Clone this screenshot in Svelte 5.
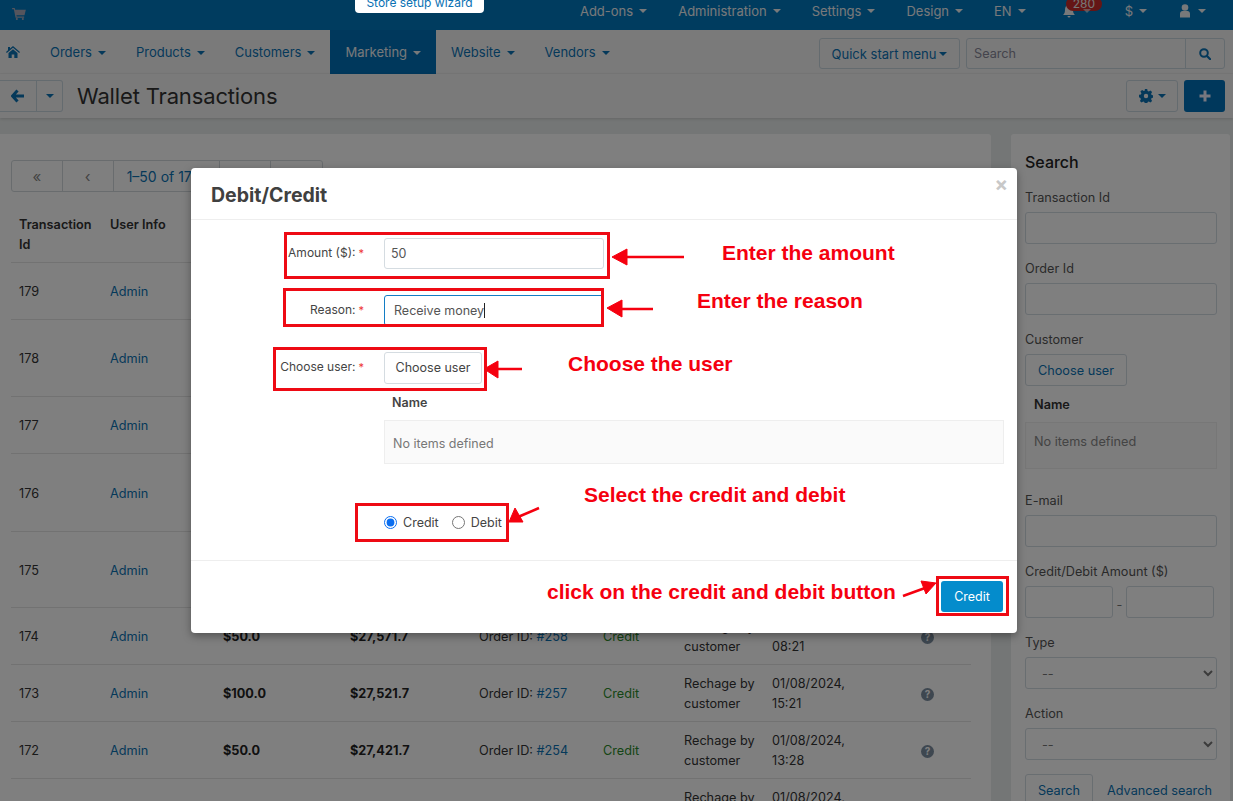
<script>
  const topItems = [
    { label: 'Add-ons' }, { label: 'Administration' }, { label: 'Settings' }, { label: 'Design' }, { label: 'EN' }
  ];
  const navItems = [
    { label: 'Orders' }, { label: 'Products' }, { label: 'Customers' },
    { label: 'Marketing', active: true }, { label: 'Website' }, { label: 'Vendors' }
  ];
  const rows = [
    { id: 179, h: 57, amount: '$50.0', balance: '$28,171.7', order: '#262', date: '02/08/2024,', time: '09:10' },
    { id: 178, h: 77, amount: '$100.0', balance: '$28,121.7', order: '#261', date: '02/08/2024,', time: '08:55' },
    { id: 177, h: 57, amount: '$200.0', balance: '$28,021.7', order: '#260', date: '01/08/2024,', time: '17:40' },
    { id: 176, h: 78, amount: '$100.0', balance: '$27,821.7', order: '#259', date: '01/08/2024,', time: '16:02' },
    { id: 175, h: 76, amount: '$150.0', balance: '$27,721.7', order: '#259', date: '01/08/2024,', time: '15:44' },
    { id: 174, h: 57, amount: '$50.0', balance: '$27,571.7', order: '#258', date: '02/08/2024,', time: '08:21' },
    { id: 173, h: 57, amount: '$100.0', balance: '$27,521.7', order: '#257', date: '01/08/2024,', time: '15:21' },
    { id: 172, h: 57, amount: '$50.0', balance: '$27,421.7', order: '#254', date: '01/08/2024,', time: '13:28' },
    { id: 171, h: 57, amount: '$50.0', balance: '$27,371.7', order: '#253', date: '01/08/2024,', time: '12:10' }
  ];
</script>

<div class="page">
  <header class="topbar">
    <svg class="cart" viewBox="0 0 16 14"><path d="M0 0h3l.5 2H16l-1.600 6.500H5l.3 1.500H14v1.400H4L2 1.400H0z"/><circle cx="5.500" cy="12.800" r="1.200"/><circle cx="12.500" cy="12.800" r="1.200"/></svg>
    <div class="topmenu">
      {#each topItems as item}
        <span class="topitem">{item.label}<i class="caret"></i></span>
      {/each}
      <span class="topitem bell">
        <svg class="ic14" viewBox="0 0 14 14"><path d="M7 0a1 1 0 0 1 1 1.100C10.200 1.600 11 3.500 11 6c0 3 1 4 2 5H1c1-1 2-2 2-5 0-2.500.8-4.400 3-4.900A1 1 0 0 1 7 0zM5.500 12h3a1.500 1.500 0 0 1-3 0z"/></svg>
        <b class="badge">280</b><i class="caret"></i>
      </span>
      <span class="topitem">$<i class="caret"></i></span>
      <span class="topitem">
        <svg class="ic14" viewBox="0 0 14 14"><circle cx="7" cy="3.500" r="3.300"/><path d="M2 13.500V10c0-2 1-3 2.500-3h5C11 7 12 8 12 10v3.500z"/></svg><i class="caret"></i>
      </span>
    </div>
  </header>

  <nav class="navbar">
    <svg class="home" viewBox="0 0 14 12"><path d="M7 0l7 6-.8.900L7 1.700.8 6.900 0 6l2-1.700V1h2v1.600zM2.500 7L7 3.200 11.500 7v5H8.300V8.500H5.700V12H2.500z"/></svg>
    <div class="navitems">
      {#each navItems as item}
        <span class="navitem" class:active={item.active}>{item.label}<i class="caret"></i></span>
      {/each}
    </div>
    <div class="navtools">
      <span class="btn quick">Quick start menu<i class="caret"></i></span>
      <div class="searchgroup">
        <span class="ph">Search</span>
        <span class="searchbtn">
          <svg class="ic12" viewBox="0 0 12 12"><circle cx="5" cy="5" r="3.800" fill="none" stroke="currentColor" stroke-width="2"/><path d="M8 8l3.200 3.200" stroke="currentColor" stroke-width="2.200" stroke-linecap="round"/></svg>
        </span>
      </div>
    </div>
  </nav>

  <div class="titlebar">
    <div class="backgroup">
      <span class="backbtn">
        <svg class="ic14" viewBox="0 0 14 14"><path d="M6.500 1.500L1.500 7l5 5.500M2 7h11" fill="none" stroke="currentColor" stroke-width="3"/></svg>
      </span>
      <span class="backcaret"><i class="caret"></i></span>
    </div>
    <h1>Wallet Transactions</h1>
    <div class="titletools">
      <span class="gearbtn">
        <svg class="ic14" viewBox="0 0 14 14"><path fill-rule="evenodd" d="M5.800 0h2.400l.4 1.900 1.200.5 1.600-1 1.700 1.700-1 1.600.5 1.200 1.900.4v2.400l-1.900.4-.5 1.200 1 1.600-1.700 1.700-1.600-1-1.200.5-.4 1.900H5.800l-.4-1.900-1.200-.5-1.600 1-1.700-1.700 1-1.600-.5-1.200L0 8.200V5.800l1.900-.4.500-1.200-1-1.600 1.700-1.700 1.600 1 1.200-.5zM7 4.800a2.200 2.200 0 1 0 0 4.400 2.200 2.200 0 0 0 0-4.400z"/></svg>
        <i class="caret"></i>
      </span>
      <span class="plusbtn">
        <svg class="ic12" viewBox="0 0 12 12"><path d="M6 .5v11M.5 6h11" stroke="currentColor" stroke-width="3"/></svg>
      </span>
    </div>
  </div>

  <main class="content">
    <section class="tablecard">
      <div class="pager">
        <span class="pg sym">«</span>
        <span class="pg sym">‹</span>
        <span class="pg range">1–50 of 179</span>
        <span class="pg sym">›</span>
        <span class="pg sym">»</span>
      </div>
      <div class="thead tgrid">
        <span>Transaction Id</span><span>User Info</span><span>Amount</span><span>Balance</span>
        <span>Reference</span><span>Action</span><span>Reason</span><span>Date</span><span></span>
      </div>
      {#each rows as r}
        <div class="trow tgrid" style="height:{r.h}px">
          <span>{r.id}</span>
          <span class="link">Admin</span>
          <b>{r.amount}</b>
          <b>{r.balance}</b>
          <span>Order ID: <span class="link">{r.order}</span></span>
          <span class="green">Credit</span>
          <span class="two">Rechage by<br />customer</span>
          <span class="two">{r.date}<br />{r.time}</span>
          <span class="q">?</span>
        </div>
      {/each}
    </section>

    <aside class="side">
      <h2>Search</h2>
      <label for="s1">Transaction Id</label><input id="s1" class="sinput" />
      <label for="s2">Order Id</label><input id="s2" class="sinput" />
      <span class="slabel">Customer</span>
      <span class="choose">Choose user</span>
      <strong class="sname">Name</strong>
      <div class="sempty">No items defined</div>
      <label for="s3">E-mail</label><input id="s3" class="sinput" />
      <label for="s4">Credit/Debit Amount ($)</label>
      <div class="range2"><input id="s4" class="sinput" /><span>-</span><input class="sinput" aria-label="to" /></div>
      <label for="s5">Type</label><select id="s5" class="sinput"><option>--</option></select>
      <label for="s6">Action</label><select id="s6" class="sinput"><option>--</option></select>
      <div class="sactions"><span class="searchb">Search</span><span class="adv">Advanced search</span></div>
    </aside>
  </main>
</div>

<div class="backdrop"></div>
<span class="wizard">Store setup wizard</span>

<div class="modal">
  <div class="mhead"><h3>Debit/Credit</h3><span class="close">×</span></div>
  <div class="mbody">
    <div class="frow r1"><span class="flabel">Amount ($):<em>*</em></span><input class="finput" value="50" /></div>
    <div class="frow r2"><span class="flabel">Reason:<em>*</em></span><div class="finput focus">Receive money<i class="cursor"></i></div></div>
    <div class="frow r3"><span class="flabel">Choose user:<em>*</em></span><span class="mchoose">Choose user</span></div>
    <strong class="mname">Name</strong>
    <div class="mempty">No items defined</div>
    <div class="radios">
      <label><input type="radio" name="k" checked />Credit</label>
      <label><input type="radio" name="k" />Debit</label>
    </div>
  </div>
  <div class="mfoot"><span class="creditbtn">Credit</span></div>
</div>

<svg class="arrows" viewBox="0 0 1233 801">
  <g fill="#f5000f" stroke="#f5000f">
    <path d="M684 257H622" stroke-width="2.500"/><path d="M612 257l15-8v16z"/>
    <path d="M653 309H618" stroke-width="2.500"/><path d="M607 308l15-8v17z"/>
    <path d="M522 369H494" stroke-width="2.500"/><path d="M484 369l14-8v17z"/>
    <path d="M539 508L518 517" stroke-width="2.500"/><path d="M509 522l6-14 8 14z"/>
    <path d="M903 596L925 588" stroke-width="2.500"/><path d="M936 583l-15-2 5 13z"/>
  </g>
</svg>

<i class="rbox b1"></i><i class="rbox b2"></i><i class="rbox b3"></i><i class="rbox b4"></i><i class="rbox b5"></i>
<span class="note n1">Enter the amount</span>
<span class="note n2">Enter the reason</span>
<span class="note n3">Choose the user</span>
<span class="note n4">Select the credit and debit</span>
<span class="note n5">click on the credit and debit button</span>

<style>
  :global(body) {
    margin: 0;
    width: 1233px;
    height: 801px;
    overflow: hidden;
    position: relative;
    font-family: Inter, "Noto Sans", sans-serif;
    font-size: 12.700px;
    color: #333;
    background: #eaeeee;
  }
  .page { width: 1233px; height: 801px; overflow: hidden; display: flex; flex-direction: column; }
  .caret {
    display: inline-block; width: 0; height: 0; margin-left: 6px; vertical-align: middle;
    border-left: 4px solid transparent; border-right: 4px solid transparent; border-top: 4px solid currentColor;
  }
  .topbar {
    flex: none; height: 30px; background: #0078bf; color: #f0f3f5; font-size: 13px;
    display: flex; align-items: center; padding: 0 27px 0 12px; box-sizing: border-box;
  }
  .cart { width: 14px; height: 12px; fill: #aab; margin-top: -2px; }
  .ic14 { width: 14px; height: 14px; fill: currentColor; }
  .ic12 { width: 12px; height: 12px; }
  .topmenu { margin-left: auto; display: flex; align-items: center; gap: 31px; margin-top: -9px; height: 20px; }
  .topitem { position: relative; white-space: nowrap; display: flex; align-items: center; }
  .bell { width: 32px; margin-left: 5px; }
  .bell .caret { margin-left: 7px; opacity: .6; }
  .badge {
    position: absolute; left: 4px; top: -7px; height: 14px; padding: 0 7px; border-radius: 8px;
    background: #c92a2a; color: #eee; font-size: 12px; font-weight: 400; line-height: 14px;
  }
  .navbar {
    flex: none; height: 44px; background: #f5f5f5; display: flex; align-items: flex-start;
    padding: 0 8px 0 6px; box-sizing: border-box; border-bottom: 1px solid #eee;
  }
  .home { width: 14px; height: 12px; fill: #0b72b4; margin-top: 16px; }
  .navitems { display: flex; margin-left: 15px; }
  .navitem { height: 44px; line-height: 44px; padding: 0 15px; color: #0b72b4; white-space: nowrap; font-size: 13px; }
  .navitem.active { background: #0070b8; color: #eef2f5; }
  .navtools { margin-left: auto; display: flex; gap: 6px; margin-top: 8px; }
  .btn, .searchgroup { height: 31px; box-sizing: border-box; border: 1px solid #c9d6df; border-radius: 3px; display: flex; align-items: center; }
  .quick { width: 141px; justify-content: center; color: #0b72b4; font-size: 13px; }
  .quick .caret { margin-left: 3px; }
  .searchgroup { width: 259px; color: #889; }
  .ph { flex: 1; padding-left: 7px; }
  .searchbtn { width: 38px; height: 100%; border-left: 1px solid #c9d6df; display: flex; align-items: center; justify-content: center; color: #0b72b4; }
  .titlebar {
    flex: none; height: 44px; background: #f5f5f5; display: flex; align-items: center; padding: 0 8px 0 0;
    box-sizing: border-box; box-shadow: 0 1px 3px rgba(0,0,0,.15); position: relative;
  }
  .backgroup { display: flex; height: 32px; width: 63px; border: 1px solid #c9d6df; border-left: 0; border-radius: 0 3px 3px 0; box-sizing: border-box; color: #0b72b4; }
  .backbtn { width: 37px; display: flex; align-items: center; justify-content: center; border-right: 1px solid #c9d6df; box-sizing: border-box; }
  .backcaret { flex: 1; display: flex; align-items: center; justify-content: center; }
  .backcaret .caret { margin: 0; }
  h1 { margin: 0 0 0 14px; font-size: 22px; font-weight: 400; color: #333; letter-spacing: -.15px; white-space: nowrap; }
  .titletools { margin-left: auto; display: flex; gap: 6px; }
  .gearbtn { width: 52px; height: 32px; box-sizing: border-box; border: 1px solid #c9d6df; border-radius: 3px; display: flex; align-items: center; justify-content: center; color: #0b72b4; }
  .gearbtn .caret { margin-left: 5px; }
  .plusbtn { width: 41px; height: 32px; background: #0070b8; color: #eef; border-radius: 3px; display: flex; align-items: center; justify-content: center; }
  .content { flex: 1; display: flex; align-items: flex-start; padding-top: 16px; min-height: 0; background: #e9edec; }
  .tablecard { width: 991px; height: 700px; background: #fff; padding: 26px 20px 0 11px; box-sizing: border-box; border-radius: 0 3px 0 0; flex: none; }
  .pager { display: flex; height: 32px; box-sizing: border-box; border: 1px solid #d3d9dd; border-radius: 3px; width: 312px; }
  .pg { display: flex; align-items: center; justify-content: center; width: 51px; border-right: 1px solid #d3d9dd; box-sizing: border-box; color: #888; font-size: 15px; }
  .pg:last-child { border-right: 0; }
  .range { width: 107px; color: #0b72b4; font-size: 14px; white-space: nowrap; justify-content: flex-start; padding-left: 13px; overflow: hidden; }
  .tgrid { display: grid; grid-template-columns: 99px 113px 127px 129px 124px 81px 88px 149px 50px; }
  .tgrid > :first-child { padding-left: 8px; }
  .thead { margin-top: 20px; height: 51px; font-weight: 600; line-height: 20px; border-bottom: 1px solid #e4e4e4; box-sizing: border-box; padding-top: 3px; }
  .thead > :first-child { padding-right: 10px; }
  .trow { align-items: center; border-bottom: 1px solid #e4e4e4; box-sizing: border-box; line-height: 20px; padding-top: 2px; }
  .trow b { font-weight: 700; color: #222; }
  .link { color: #0b72b4; }
  .green { color: #2a8a2a; }
  .q { width: 13px; height: 13px; border-radius: 50%; background: #7c8ea0; color: #fff; font-size: 10px; font-weight: 700; line-height: 13px; text-align: center; }
  .side { margin-left: 20px; width: 219px; height: 700px; background: #fff; border-radius: 3px 3px 0 0; box-sizing: border-box; padding: 18px 13px 0 14px; display: flex; flex-direction: column; align-items: flex-start; flex: none; }
  h2 { margin: 0 0 15px; font-size: 16px; font-weight: 500; line-height: 20px; color: #222; }
  .side label, .slabel { line-height: 20px; padding-top: 1px; margin-bottom: 4px; color: #555; }
  .sinput { width: 192px; height: 32px; box-sizing: border-box; border: 1px solid #d3dce2; border-radius: 3px; background: #fff; margin: 0 0 14px; padding: 0 12px; font: inherit; color: #777; flex: none; }
  .choose { width: 102px; height: 32px; box-sizing: border-box; border: 1px solid #d3dce2; border-radius: 3px; display: flex; align-items: center; justify-content: center; color: #0b72b4; }
  .sname { margin: 10px 0 0 9px; line-height: 18px; font-weight: 600; }
  .sempty { margin: 8px 0 21px; width: 192px; height: 47px; box-sizing: border-box; border: 1px solid #eee; background: #fafafa; padding: 9px 8px; color: #888; line-height: 20px; }
  .range2 { display: flex; gap: 0; align-items: flex-start; width: 192px; }
  .range2 .sinput { width: 88px; }
  .range2 span { width: 13px; text-align: center; line-height: 38px; color: #777; }
  .sactions { display: flex; align-items: center; gap: 14px; }
  .searchb { width: 68px; height: 32px; box-sizing: border-box; border: 1px solid #d3dce2; border-radius: 3px; display: flex; align-items: center; justify-content: center; color: #0b72b4; }
  .adv { color: #0b72b4; white-space: nowrap; }

  .backdrop { position: absolute; inset: 0; background: rgba(0,0,0,.5); }
  .wizard {
    position: absolute; left: 355px; top: -8px; width: 129px; height: 21px; background: #fff; color: #0b72b4;
    border-radius: 4px; display: flex; align-items: center; justify-content: center; font-size: 12px;
  }
  .modal {
    position: absolute; left: 191px; top: 168px; width: 826px; height: 465px; background: #fff; border-radius: 4px;
    box-shadow: 0 3px 8px rgba(0,0,0,.35); display: flex; flex-direction: column; box-sizing: border-box;
  }
  .mhead { flex: none; height: 52px; box-sizing: border-box; border-bottom: 1px solid #eee; position: relative; padding: 14px 20px 0; }
  h3 { margin: 0; font-size: 19.500px; line-height: 27px; font-weight: 700; color: #404040; }
  .close { position: absolute; right: 9px; top: 6px; color: #c8c8c8; font-size: 20px; line-height: 20px; font-weight: 700; }
  .mbody { flex: 1; position: relative; box-sizing: border-box; padding: 18px 13px 0 0; display: flex; flex-direction: column; align-items: flex-start; border-bottom: 1px solid #eee; }
  .frow { display: flex; align-items: flex-start; width: 100%; }
  .flabel { width: 173px; flex: none; text-align: right; white-space: nowrap; line-height: 20px; padding-top: 5px; box-sizing: border-box; color: #444; font-size: 12px; }
  .flabel em { color: #e33; font-style: normal; margin-left: 3px; font-size: 11px; }
  .r1 { margin-bottom: 26px; }
  .r2 { margin-bottom: 26px; }
  .finput { margin-left: 20px; width: 220px; height: 31px; box-sizing: border-box; border: 1px solid #d5dce1; border-radius: 3px; padding: 0 6px; font: inherit; color: #555; display: flex; align-items: center; font-size: 12.500px; }
  .focus { border-color: #137dc5; padding-left: 9px; }
  .cursor { width: 1px; height: 15px; background: #222; }
  .mchoose { margin-left: 20px; width: 98px; height: 32px; padding-bottom: 1px; box-sizing: border-box; border: 1px solid #d5dce1; border-radius: 3px; display: flex; align-items: center; justify-content: center; color: #444; font-size: 12.500px; }
  .mname { margin: 10px 0 0 201px; line-height: 18px; font-weight: 600; font-size: 12.500px; color: #444; }
  .mempty { margin: 8px 0 0 193px; width: 620px; height: 44px; box-sizing: border-box; border: 1px solid #eee; background: #fafafa; padding: 0 8px; line-height: 46px; color: #777; font-size: 12.500px; }
  .radios { margin: 51px 0 0 193px; display: flex; gap: 13px; color: #444; font-size: 12.500px; }
  .radios label { display: flex; align-items: center; }
  .radios input { width: 13px; height: 13px; margin: 0 6px 0 0; accent-color: #0a6ef0; }
  .mfoot { flex: none; height: 72px; display: flex; justify-content: flex-end; padding: 20px 14px 0 0; box-sizing: border-box; }
  .creditbtn { width: 62px; height: 31px; background: #048ccc; color: #fff; border-radius: 3px; display: flex; align-items: center; justify-content: center; font-size: 12.500px; }

  .arrows { position: absolute; left: 0; top: 0; width: 1233px; height: 801px; pointer-events: none; }
  .rbox { position: absolute; box-sizing: border-box; border: 3px solid #ee0a14; }
  .b1 { left: 284px; top: 232px; width: 326px; height: 47px; }
  .b2 { left: 283px; top: 288px; width: 321px; height: 39px; }
  .b3 { left: 273px; top: 347px; width: 214px; height: 44px; }
  .b4 { left: 355px; top: 503px; width: 154px; height: 39px; }
  .b5 { left: 936px; top: 576px; width: 73px; height: 40px; }
  .note { position: absolute; font-family: "Liberation Sans", Arial, sans-serif; font-weight: 700; font-size: 21px; line-height: 24px; color: #f5000f; white-space: nowrap; }
  .n1 { left: 722px; top: 241px; }
  .n2 { left: 697px; top: 289px; }
  .n3 { left: 568px; top: 352px; }
  .n4 { left: 584px; top: 483px; }
  .n5 { left: 547px; top: 580px; }
</style>
